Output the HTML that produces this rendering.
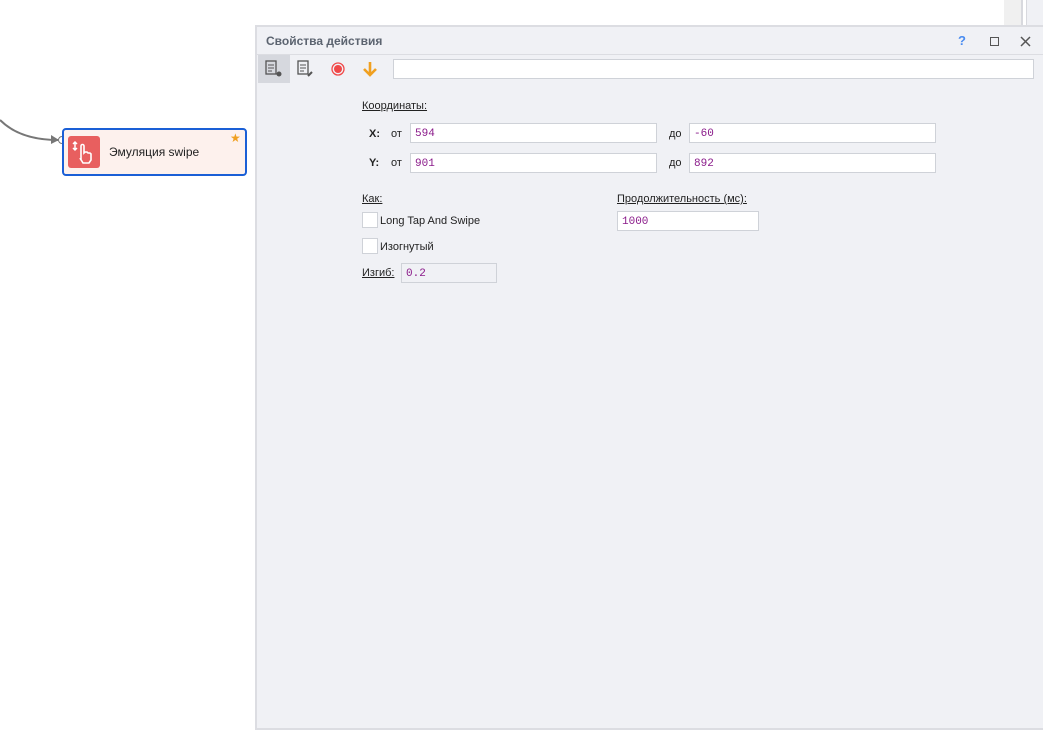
<!DOCTYPE html>
<html><head><meta charset="utf-8"><style>
*{box-sizing:border-box;margin:0;padding:0}
body{width:1043px;height:732px;background:#fff;position:relative;overflow:hidden;font-family:"Liberation Sans",sans-serif;font-size:11px;color:#222}
.abs{position:absolute}
.inp{position:absolute;background:#fff;border:1px solid #cfd2d8;height:20px;font-family:"Liberation Mono",monospace;font-size:11px;color:#8a1a8a;padding:4px 0 0 4px}
.lbl{position:absolute;font-size:11px;color:#222}
.u{text-decoration:underline}
.cb{position:absolute;width:16px;height:16px;background:#fff;border:1px solid #cfd2d8}
</style></head><body>
<div class="abs" style="left:1004px;top:0;width:17px;height:25px;background:#f0f0f0"></div>
<div class="abs" style="left:1021px;top:0;width:2px;height:25px;background:#d8d9de"></div>
<div class="abs" style="left:1026px;top:0;width:17px;height:25px;background:#f0f1f5;border-left:1px solid #d8d9de"></div>
<svg class="abs" style="left:0;top:100px" width="70" height="50"><path d="M0 20 Q20 40 58 40" fill="none" stroke="#777" stroke-width="2"/><path d="M51 35 L59 40 L51 44Z" fill="#777"/><circle cx="62" cy="40" r="3.5" fill="#fff" stroke="#777"/></svg>
<div class="abs" style="left:62px;top:128px;width:185px;height:48px;border:2px solid #1a5fd6;border-radius:4px;background:#fdf1ed"></div>
<div class="abs" style="left:68px;top:136px;width:32px;height:32px;background:#e85f5f;border-radius:3px"></div>
<svg class="abs" style="left:68px;top:136px" width="32" height="32"><path d="M7 6v8M5 8l2-2 2 2M5 12l2 2 2-2" stroke="#fff" stroke-width="1.5" fill="none"/><path d="M13 24V10a1.5 1.5 0 0 1 3 0v7l1-1h2l1 1h2l1 1v6l-2 3h-6l-3-5z" stroke="#fff" stroke-width="1.6" fill="none"/></svg>
<div class="lbl" style="left:109px;top:145px;font-size:12px;color:#222">Эмуляция swipe</div>
<div class="abs" style="left:230px;top:131px;color:#f0a020;font-size:12px">★</div>
<div class="abs" style="left:255px;top:25px;width:788px;height:705px;background:#f0f1f5;border:2px solid #dcdde2;border-right:none"></div>
<div class="abs" style="left:257px;top:54px;width:786px;height:1px;background:#dcdde2"></div>
<div class="lbl" style="left:266px;top:34px;font-weight:bold;color:#5c6470;font-size:12px">Свойства действия</div>
<div class="lbl" style="left:958px;top:33px;color:#4a8cf0;font-weight:bold;font-size:13px">?</div>
<div class="abs" style="left:990px;top:37px;width:9px;height:9px;border:1.5px solid #555"></div>
<svg class="abs" style="left:1020px;top:36px" width="11" height="11"><path d="M1 1l9 9M10 1l-9 9" stroke="#555" stroke-width="1.5"/></svg>
<div class="abs" style="left:258px;top:55px;width:32px;height:28px;background:#d6d8de"></div>
<svg class="abs" style="left:264px;top:60px" width="20" height="18"><rect x="2" y="1" width="10" height="13" fill="none" stroke="#555" stroke-width="1.3"/><path d="M4 5h6M4 8h6M4 11h4" stroke="#555"/><circle cx="15" cy="14" r="2.5" fill="#555"/></svg>
<svg class="abs" style="left:296px;top:60px" width="20" height="18"><rect x="2" y="1" width="10" height="13" fill="none" stroke="#555" stroke-width="1.3"/><path d="M4 5h6M4 8h6M4 11h4" stroke="#555"/><path d="M12 16l4-4" stroke="#555" stroke-width="2"/></svg>
<svg class="abs" style="left:330px;top:61px" width="16" height="16"><circle cx="8" cy="8" r="6" fill="none" stroke="#f04848" stroke-width="1.3"/><circle cx="8" cy="8" r="4" fill="#f04848"/></svg>
<svg class="abs" style="left:361px;top:60px" width="18" height="18"><path d="M9 2v13M3 9l6 6 6-6" stroke="#f0a020" stroke-width="2.6" fill="none"/></svg>
<div class="abs" style="left:393px;top:59px;width:641px;height:20px;background:#fff;border:1px solid #cfd2d8"></div>
<div class="lbl u" style="left:362px;top:100px">Координаты:</div>
<div class="lbl" style="left:369px;top:128px;font-weight:bold">X:</div>
<div class="lbl" style="left:391px;top:128px">от</div>
<div class="inp" style="left:410px;top:123px;width:247px">594</div>
<div class="lbl" style="left:669px;top:128px">до</div>
<div class="inp" style="left:689px;top:123px;width:247px">-60</div>
<div class="lbl" style="left:369px;top:157px;font-weight:bold">Y:</div>
<div class="lbl" style="left:391px;top:157px">от</div>
<div class="inp" style="left:410px;top:153px;width:247px">901</div>
<div class="lbl" style="left:669px;top:157px">до</div>
<div class="inp" style="left:689px;top:153px;width:247px">892</div>
<div class="lbl u" style="left:362px;top:193px">Как:</div>
<div class="lbl u" style="left:617px;top:193px">Продолжительность (мс):</div>
<div class="cb" style="left:362px;top:212px"></div>
<div class="lbl" style="left:380px;top:215px">Long Tap And Swipe</div>
<div class="inp" style="left:617px;top:211px;width:142px">1000</div>
<div class="cb" style="left:362px;top:238px"></div>
<div class="lbl" style="left:380px;top:241px">Изогнутый</div>
<div class="lbl u" style="left:362px;top:267px">Изгиб:</div>
<div class="inp" style="left:401px;top:263px;width:96px;background:#f0f1f5">0.2</div>
</body></html>
